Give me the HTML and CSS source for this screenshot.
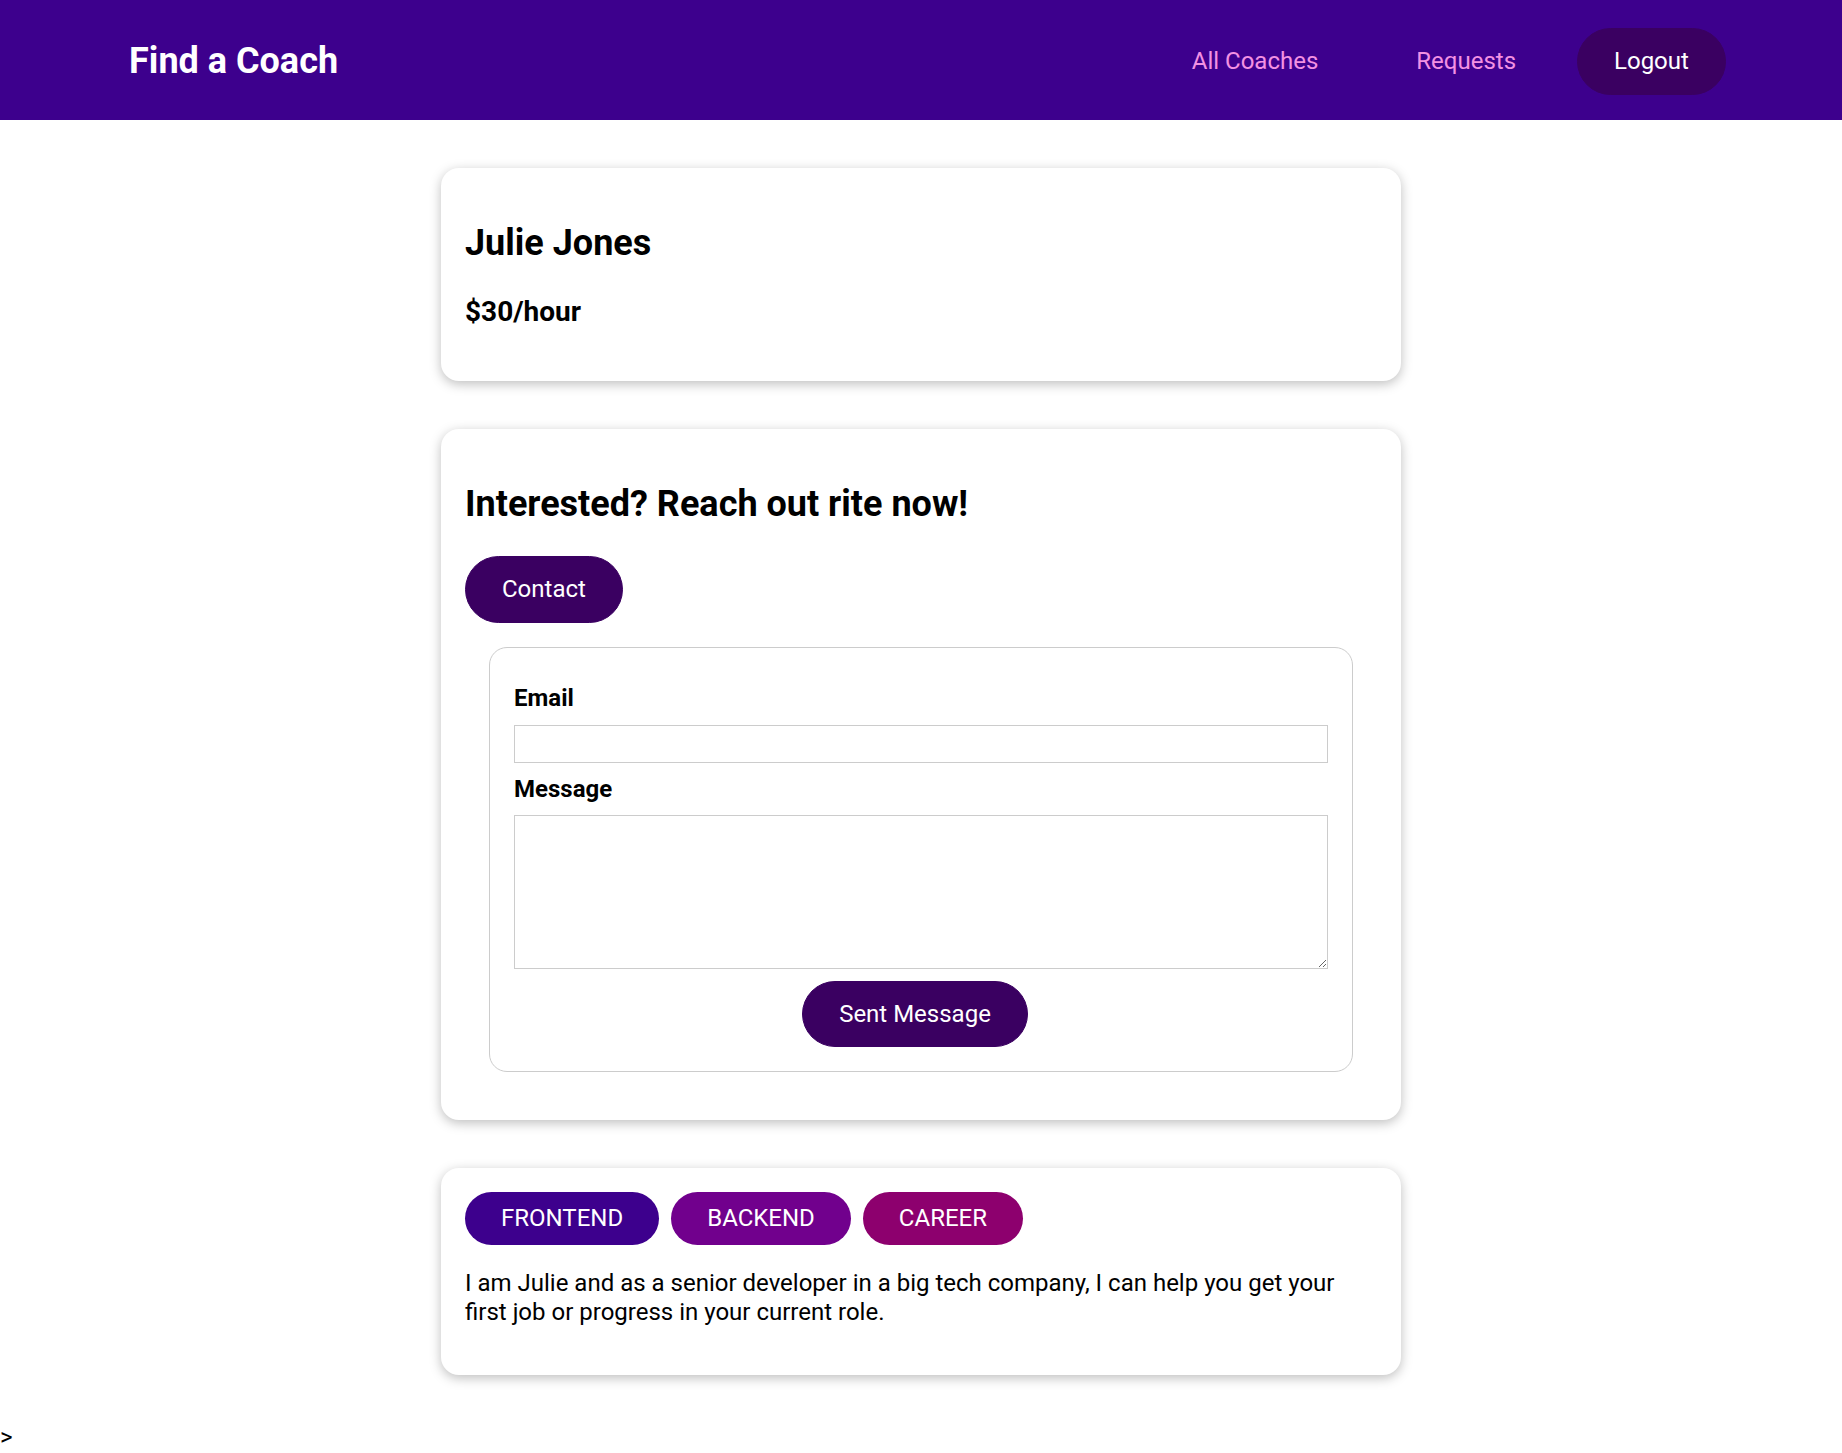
FILE: index.html
```html
<!DOCTYPE html>
<html lang="en">
<head>
<meta charset="utf-8">
<title>Find a Coach</title>
<link rel="stylesheet" href="styles.css">
</head>
<body>
<div class="app">
  <header class="site-header">
    <nav class="site-nav">
      <h1 class="brand"><a href="#" class="brand-link">Find a Coach</a></h1>
      <ul class="nav-list">
        <li class="nav-item"><a href="#" class="nav-link">All Coaches</a></li>
        <li class="nav-item"><a href="#" class="nav-link">Requests</a></li>
        <li class="nav-item"><button class="btn">Logout</button></li>
      </ul>
    </nav>
  </header>
  <main>
    <section>
      <div class="card">
        <h2 class="title">Julie Jones</h2>
        <h3 class="rate">$30/hour</h3>
      </div>
    </section>
    <section>
      <div class="card">
        <header>
          <h2 class="title">Interested? Reach out rite now!</h2>
          <a href="#" class="btn">Contact</a>
        </header>
        <form class="contact-form">
          <div class="form-control">
            <label class="label" for="email">Email</label>
            <input class="field" type="email" id="email">
          </div>
          <div class="form-control">
            <label class="label" for="message">Message</label>
            <textarea class="field" id="message" rows="5"></textarea>
          </div>
          <div class="actions">
            <button class="btn" type="button">Sent Message</button>
          </div>
        </form>
      </div>
    </section>
    <section>
      <div class="card">
        <span class="badge frontend">FRONTEND</span><span class="badge backend">BACKEND</span><span class="badge career">CAREER</span>
        <p class="desc">I am Julie and as a senior developer in a big tech company, I can help you get your first job or progress in your current role.</p>
      </div>
    </section>
  </main>
  <div class="stray">&gt;</div>
</div>
</body>
</html>
```

FILE: styles.css
```css
* { box-sizing: border-box; }
html {
  font-family: "Roboto", "Liberation Sans", sans-serif;
  font-size: 24px;
  line-height: 1.2;
}
body { margin: 0; }

.site-header {
  width: 100%;
  height: 120px;
  padding-top: 3px;
  background-color: #3d008d;
  display: flex;
  justify-content: center;
  align-items: center;
}
.site-nav {
  width: 90%;
  margin: auto;
  display: flex;
  justify-content: space-between;
  align-items: center;
}
.brand {
  margin: 0;
  font-size: 36px;
}
.brand-link {
  color: white;
  text-decoration: none;
  display: inline-block;
  padding: 18px 36px;
  border: 1px solid transparent;
}
.nav-list {
  list-style: none;
  margin: 0;
  padding: 0;
  display: flex;
  justify-content: center;
  align-items: center;
}
.nav-item { margin: 0 12px; }
.nav-link {
  text-decoration: none;
  color: #f391e3;
  display: inline-block;
  padding: 18px 36px;
  border: 1px solid transparent;
}

.btn {
  text-decoration: none;
  padding: 18px 36px;
  font: inherit;
  background-color: #3a0061;
  border: 1px solid #3a0061;
  color: white;
  cursor: pointer;
  border-radius: 45px;
  margin-right: 12px;
  display: inline-block;
}

.card {
  border-radius: 18px;
  box-shadow: 0 3px 12px rgba(0, 0, 0, 0.26);
  padding: 24px;
  margin: 48px auto;
  max-width: 960px;
  background: #fff;
}
.title { font-size: 36px; margin: 30px 0; }
.rate { font-size: 28px; margin: 28px 0; }

.contact-form {
  margin: 24px;
  border: 1px solid #ccc;
  border-radius: 18px;
  padding: 24px;
}
.form-control { margin: 12px 0; }
.label {
  font-weight: bold;
  margin-bottom: 12px;
  display: block;
}
.field {
  display: block;
  width: 100%;
  font: inherit;
  border: 1px solid #ccc;
  padding: 3.6px;
}
.actions { text-align: center; }

.badge {
  border-radius: 45px;
  padding: 12px 36px;
  display: inline-block;
  margin-right: 12px;
  color: white;
}
.frontend { background-color: #3d008d; }
.backend { background-color: #71008d; }
.career { background-color: #8d006e; }
.desc { margin: 24px 0; }
```
